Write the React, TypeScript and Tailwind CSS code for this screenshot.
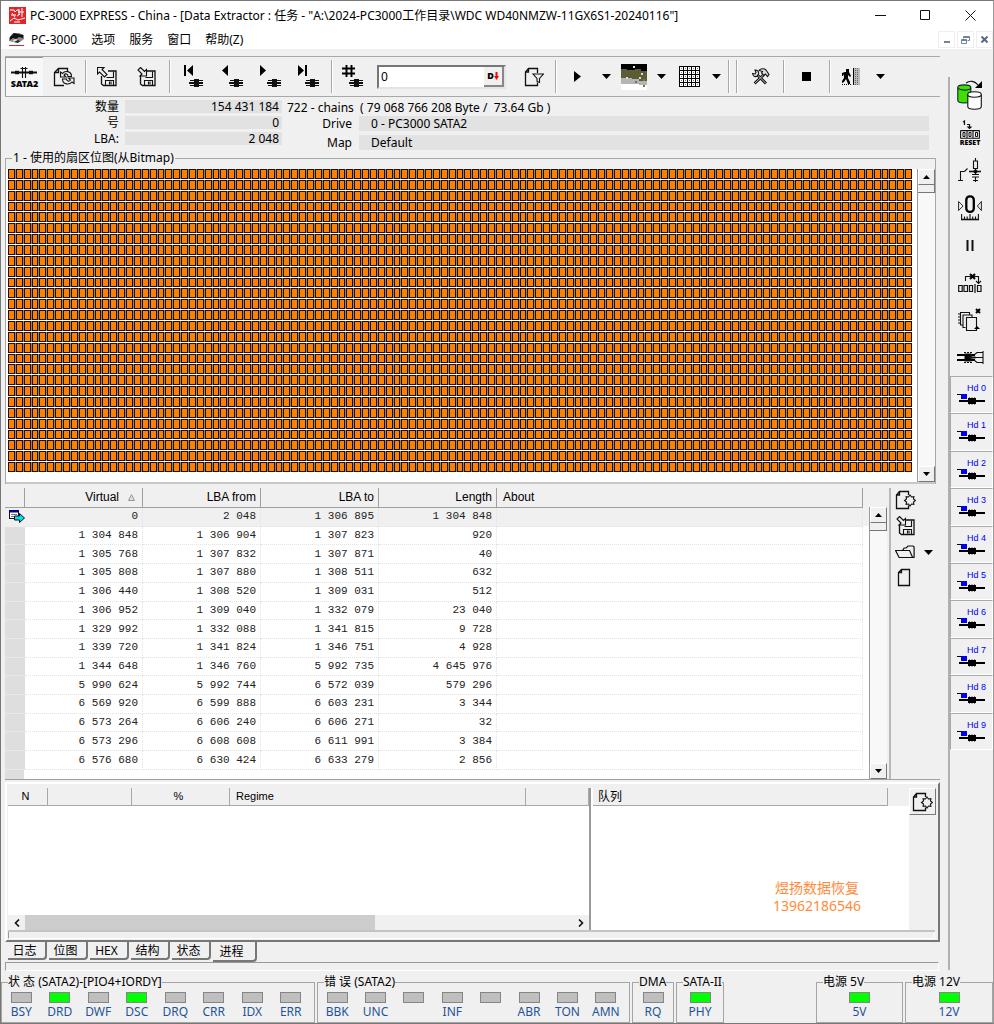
import type { ReactNode } from 'react';

const COLS = 115;
const ROWS = 28;

const rows = [
  ['0', '2 048', '1 306 895', '1 304 848'],
  ['1 304 848', '1 306 904', '1 307 823', '920'],
  ['1 305 768', '1 307 832', '1 307 871', '40'],
  ['1 305 808', '1 307 880', '1 308 511', '632'],
  ['1 306 440', '1 308 520', '1 309 031', '512'],
  ['1 306 952', '1 309 040', '1 332 079', '23 040'],
  ['1 329 992', '1 332 088', '1 341 815', '9 728'],
  ['1 339 720', '1 341 824', '1 346 751', '4 928'],
  ['1 344 648', '1 346 760', '5 992 735', '4 645 976'],
  ['5 990 624', '5 992 744', '6 572 039', '579 296'],
  ['6 569 920', '6 599 888', '6 603 231', '3 344'],
  ['6 573 264', '6 606 240', '6 606 271', '32'],
  ['6 573 296', '6 608 608', '6 611 991', '3 384'],
  ['6 576 680', '6 630 424', '6 633 279', '2 856'],
];

const stateLeds = [
  { label: 'BSY' },
  { label: 'DRD', on: true },
  { label: 'DWF' },
  { label: 'DSC', on: true },
  { label: 'DRQ' },
  { label: 'CRR' },
  { label: 'IDX' },
  { label: 'ERR' },
];

const errorLeds = [
  { label: 'BBK' },
  { label: 'UNC' },
  { label: '' },
  { label: 'INF' },
  { label: '' },
  { label: 'ABR' },
  { label: 'TON' },
  { label: 'AMN' },
];

/* ---------- icons ---------- */

function Icon({ w, h, children }: { w: number; h: number; children: ReactNode }) {
  return (
    <svg width={w} height={h} viewBox={`0 0 ${w} ${h}`} fill="none" stroke="#111" strokeWidth="1.1" className="shrink-0">
      {children}
    </svg>
  );
}

// small platter glyph under the navigation arrows
const platter = (
  <g stroke="none" fill="#111" shapeRendering="crispEdges">
    <path d="M8 15h13v1h-13zM7 17h14v2h-14zM8 20h13v1h-13z" />
    <path d="M12 14h5v8h-5z" />
  </g>
);

function LogoIcon() {
  return (
    <svg width="17" height="17" viewBox="0 0 17 17" className="shrink-0">
      <rect width="17" height="17" fill="#e0262b" />
      <path d="M1 3h4l1 2 2-2h2M10 2v6M13 1v9M9 5h6M2 8h5M3 6l3 4M8 9l3-2M1 14l4-3 4 2 7-2M5 15h6" stroke="#fff" strokeWidth="1" fill="none" />
    </svg>
  );
}

function DriveIcon() {
  return (
    <svg width="15" height="15" viewBox="0 0 15 15" className="shrink-0">
      <path d="M0 6l4-5h6l5 2v4l-4 3H4L0 9z" fill="#888" />
      <path d="M1 5l4-4 4 1 5 1v3l-4-1-3 2-3-1-3 2z" fill="#111" />
      <path d="M4 8l3-1 3 2-3 2H5z" fill="#ddd" />
      <path d="M5 10l4 1 2-2-2-1z" fill="#222" />
      <rect y="13" width="15" height="1" fill="#e0262b" />
    </svg>
  );
}

function SataIcon() {
  return (
    <span className="flex flex-col items-center">
      <Icon w={26} h={13}>
        <path d="M0 6.500h26" strokeWidth="2" />
        <path d="M4 6.500h4M18 6.500h4" strokeWidth="3.500" />
        <path d="M9.500 2.500h7M11.500 1v11M14.500 1v11" />
      </Icon>
      <span className="text-[9px] leading-[10px] font-black">SATA2</span>
    </span>
  );
}

function SyncPageIcon() {
  return (
    <Icon w={22} h={20}>
      <path d="M11 18.500h-9.500v-13l4-4h9v3M5.500 1.500v4h-4" strokeWidth="1.300" />
      <path d="M18.500 9.500c0-6-7-6-9-3l-2-1.500v5h5.500l-2-2c1.500-2 4-1 4 1.500z" fill="#efefef" />
      <path d="M9.500 12c0 6 7 6 9.500 3l2 1.500v-5.500h-5.500l2 2c-1.500 2-4 1-4-1z" fill="#efefef" />
    </Icon>
  );
}

function FloppyIcon({ out }: { out?: boolean }) {
  return (
    <Icon w={20} h={20}>
      <path d="M4.500 9v8l2 1.500h12.500v-14.500h-8" strokeWidth="1.300" />
      <path d="M9.500 10.500h7v-6M8.500 18v-4.500h8v5M12.500 14.500v3M14 14.500v3" />
      {out ? (
        <path d="M4.500.5l4 4 2-2v6.500h-6.500l2-2-4-4z" fill="#efefef" />
      ) : (
        <path d="M.5.5h6.500l-2 2 5 5-2.500 2.500-5-5-2 2z" fill="#efefef" />
      )}
    </Icon>
  );
}

function NavIcon({ kind }: { kind: 'first' | 'prev' | 'next' | 'last' }) {
  const shape = {
    first: 'M2 0h2v11h-2zM11 0v11l-6-5.500z',
    prev: 'M6 0v11l-6-5.500z',
    next: 'M0 0v11l6-5.500z',
    last: 'M0 0v11l6-5.500zM7 0h2v11h-2z',
  }[kind];
  return (
    <Icon w={21} h={23}>
      <path d={shape} fill="#000" stroke="none" />
      {platter}
    </Icon>
  );
}

function HashIcon() {
  return (
    <Icon w={22} h={23}>
      <path d="M4.500 0v12M9.500 0v12M0 3.500h13M0 8.500h13" stroke="#000" strokeWidth="1.900" />
      {platter}
    </Icon>
  );
}

function FilterPageIcon() {
  return (
    <Icon w={20} h={20}>
      <path d="M13.500 6v-4.500h-9l-3 3.500v13.500h12v-3M4.500 1.500v3.500h-3" strokeWidth="1.300" />
      <path d="M9 7h10.500l-4 4.500v4l-2.500-1v-3z" fill="#efefef" />
    </Icon>
  );
}

function DropArrow() {
  return (
    <Icon w={9} h={5}>
      <path d="M0 0h9l-4.500 5z" fill="#000" stroke="none" />
    </Icon>
  );
}

function PictureIcon() {
  return (
    <svg width="26" height="26" viewBox="0 0 26 26" shapeRendering="crispEdges">
      <rect width="26" height="26" fill="#fff" />
      <path d="M0 0h26v7h-6v-2h-6v1h-8v-1h-6z" fill="#000" />
      <path d="M0 5h6v1h8v-1h6v2h6v10h-8v-2h-7v-1h-11z" fill="#5d5d35" />
      <path d="M0 14h11v1h7v2h8v4h-8v-1h-18z" fill="#b4b4b4" />
      <path d="M12 2h2v2h-2zM20 9h2v2h-2zM5 13h2v2h-2zM18 13h2v2h-2z" fill="#ddd" />
      <path d="M14 17h2v2h-2zM22 15h2v2h-2zM22 21h2v2h-2z" fill="#77774f" />
    </svg>
  );
}

function GridIcon() {
  return (
    <svg width="21" height="21" viewBox="0 0 21 21" shapeRendering="crispEdges">
      <rect width="21" height="21" fill="#fff" />
      <path d="M.5 0v21M4.500 0v21M8.500 0v21M12.500 0v21M16.500 0v21M20.500 0v21M0 .5h21M0 4.500h21M0 8.500h21M0 12.500h21M0 16.500h21M0 20.500h21" stroke="#000" />
      <path d="M2 2.500h18M2 6.500h18M2 10.500h18M2 14.500h18M2 18.500h18" stroke="#777" strokeDasharray="1 3" />
    </svg>
  );
}

function ToolsIcon() {
  return (
    <Icon w={18} h={17}>
      <path d="M5.500 7l8.500 8.500M12 6.500l-9.500 9" strokeWidth="2.800" />
      <path d="M5.500 7l8.500 8.500M12 6.500l-9.500 9" stroke="#eee" strokeWidth="0.800" />
      <path d="M.6 5.500l2.400.5 1-1.500-1-2.500c3 0 4 2 3.500 4l-2 2.500c-2 .5-3.500-.5-3.900-3z" fill="#ddd" />
      <path d="M7 2.500c1-2 5-2.500 7-.5l3 4.500-1.500 2-2-2.500-1.500 1.500-2.500-2.500 1-1.500z" fill="#ddd" />
    </Icon>
  );
}

function ExitIcon() {
  return (
    <Icon w={19} h={18}>
      <g stroke="none" fill="#000">
        <path d="M4 1h3v3h-3zM3 4h4l2 4-1 1-2-2v3l2 4v2h-2l-2-5-2 3-2 1v-2l2-3v-4l-1 2h-1v-3z" />
      </g>
      <path d="M0 16.500h10" strokeDasharray="1 1" />
      <rect x="11" y="0" width="7" height="17" fill="#bbb" stroke="none" />
      <path d="M11.500 0v17" stroke="#000" strokeWidth="1" />
      <path d="M13.500 0v17M15.500 0v17" stroke="#666" strokeWidth="1" strokeDasharray="1 1" />
    </Icon>
  );
}

function GearPageIcon() {
  return (
    <Icon w={21} h={20}>
      <path d="M13.500 5v-3.500h-9l-3 3.500v13.500h12v-3M4.500 1.500v3.500h-3" strokeWidth="1.300" />
      <path
        d="M15 5l1.500 2 2.400-.4-.4 2.400 2 1.500-2 1.500.4 2.400-2.400-.4-1.500 2-1.500-2-2.400.4.4-2.400-2-1.500 2-1.500-.4-2.400 2.400.4z"
        fill="#efefef"
      />
    </Icon>
  );
}

function OpenFolderIcon() {
  return (
    <Icon w={20} h={14}>
      <path d="M.6 5.500h14l3 7h-13.500zM17.600 12.500h1.500v-10.500l-1-1h-5l-2 2h-2l-1.500 2.500" strokeWidth="1.200" />
    </Icon>
  );
}

function BlankPageIcon() {
  return (
    <Icon w={14} h={19}>
      <path d="M4.500 1.500h8v16h-11v-13zM4.500 1.500v3h-3" strokeWidth="1.300" />
    </Icon>
  );
}

function CopyDisksIcon() {
  return (
    <Icon w={26} h={31}>
      <path d="M9 3c4-3 9-2 12 2" />
      <path d="M25 1v7h-7z" fill="#000" stroke="none" />
      <path d="M.8 7.500v13c0 3.300 13 3.300 13 0v-13" fill="#3fe000" stroke="#123" />
      <ellipse cx="7.300" cy="7.500" rx="6.500" ry="2.600" fill="#3fe000" stroke="#123" />
      <path d="M10.800 14.500v12c0 3.700 13.500 3.700 13.500 0v-12" fill="#fff" />
      <ellipse cx="17.500" cy="14.500" rx="6.800" ry="2.700" fill="#fff" />
    </Icon>
  );
}

function ResetIcon() {
  return (
    <span className="flex flex-col items-center">
      <Icon w={20} h={19}>
        <path d="M3 2l1.500-1v4M7 4.500h2.500v4M7.500 6.500l2 2 2-2" strokeWidth="1.200" />
        <path d="M.6 10.600h19M.6 18.200h19M.6 10.500v8M19.400 10.500v8M7 10.500v8M13 10.500v8" />
        <path d="M3 12.500h2v4h-2zM9 12.500h2v4h-2zM15.500 12.500h2v4h-2z" strokeWidth="1" />
      </Icon>
      <span className="text-[7px] leading-[8px] font-black">RESET</span>
    </span>
  );
}

function CircuitIcon() {
  return (
    <Icon w={24} h={24}>
      <path d="M0 22.500h5M2.500 22.500v-9h4l3-3M17.500 0v3M15.500 3h4v7.500h-4zM17.500 10.500v6M14 16.500h7M14 19h7M17.500 19v5M15 22.500h5" />
      <path d="M11 13.500h12" strokeWidth="1.600" />
      <circle cx="17.500" cy="13.500" r="1.500" fill="#000" />
    </Icon>
  );
}

function ZeroIcon() {
  return (
    <Icon w={24} h={26}>
      <path d="M.6 6.500v9l4.500-4.500zM23.400 6.500v9l-4-4.500z" strokeWidth="0.900" />
      <rect x="8.300" y="1.400" width="7.500" height="15.500" rx="3.500" stroke="#000" strokeWidth="2.300" />
      <path d="M3 24.500h18" strokeWidth="1.600" />
      <path d="M3.600 19v6M6.500 21.500v3M9.200 21.500v3M12 19v6M14.700 21.500v3M17.500 21.500v3M20.400 19v6" />
    </Icon>
  );
}

function PauseIcon() {
  return (
    <Icon w={8} h={11}>
      <path d="M1.500 0v11M6.500 0v11" strokeWidth="2" />
    </Icon>
  );
}

function SkipBlocksIcon() {
  return (
    <Icon w={24} h={20}>
      <path d="M7.500 8v-4.500h13v6M18 8l2.500 2.500 2.500-2.500" />
      <path d="M12 1l5 5M17 1l-5 5" stroke="#000" strokeWidth="2" />
      <path d="M.7 12.500h3.500v6h-3.500zM6 12.500h3.500v6h-3.500zM11.500 12.500h3v6h-3zM19.500 12.500h3.500v6h-3.500zM17 11v9" strokeWidth="1.200" />
    </Icon>
  );
}

function StackIcon() {
  return (
    <Icon w={24} h={24}>
      <path d="M5 17h-2.500v-12.500h9v2M7.500 19.500h-2.500v-12.500h9v2.500" />
      <path d="M2 6h-2M2 9h-2M2 12h-2M2 15h-2" />
      <path d="M8.500 9.500h10v13h-10z" fill="#efefef" />
      <path d="M18 1l4 4M22 1l-4 4" stroke="#000" strokeWidth="2" />
      <path d="M16 21h6l-3-3z" fill="#000" stroke="none" />
    </Icon>
  );
}

function ConnectorIcon() {
  return (
    <Icon w={27} h={13}>
      <path d="M0 4h18M0 9h18" stroke="#000" strokeWidth="2" />
      <path d="M8 3h6v7h-6zM12 6h6v1h-6z" fill="#000" />
      <path d="M7 1.500h2M10 1.500h2M13 1.500h2M7 11.500h2M10 11.500h2M13 11.500h2" />
      <path d="M17 4l3-2.500h6v10h-6l-3-2.500M18 6.500h8M26 0v13" />
    </Icon>
  );
}

function HdIcon() {
  return (
    <svg width="29" height="11" viewBox="0 1 29 11" fill="none" className="shrink-0">
      <path d="M0 1.500h6" stroke="#000" />
      <rect x="4" y="1" width="6" height="5" fill="#0000f0" />
      <path d="M2 8h26" stroke="#000" strokeWidth="2" />
      <path d="M11 5h8v6h-8z" fill="#000" />
      <path d="M12.500 4.500v7M15 4.500v7M17.500 4.500v7" stroke="#000" />
    </svg>
  );
}

function RowMarkerIcon() {
  return (
    <svg width="16" height="14" viewBox="0 0 16 14" fill="none">
      <rect x=".5" y=".5" width="9" height="8" fill="#fff" stroke="#111" />
      <rect width="10" height="2.500" fill="#000080" />
      <path d="M2 4.500h6M2 6.500h4" stroke="#777" />
      <path d="M5.500 6h5v-2.500l5 4.500-5 4.500v-2.500h-5z" fill="#00e0f0" stroke="#111" />
    </svg>
  );
}

/* ---------- shared pieces ---------- */

function ToolButton({ label, className, children }: { label: string; className: string; children: ReactNode }) {
  return (
    <button type="button" aria-label={label} className={`flex h-full shrink-0 items-center justify-center ${className}`}>
      {children}
    </button>
  );
}

function Separator({ className = '' }: { className?: string }) {
  return <div className={`h-[33px] w-[2px] shrink-0 border-l border-[#a8a8a8] bg-white ${className}`} />;
}

function ScrollButton({ down }: { down?: boolean }) {
  return (
    <button
      type="button"
      aria-label={down ? 'Scroll down' : 'Scroll up'}
      className="flex h-4 w-full items-center justify-center border border-t-white border-r-[#777] border-b-[#777] border-l-white bg-[#f0f0f0]"
    >
      <svg width="7" height="4" viewBox="0 0 7 4">
        <path d={down ? 'M0 0h7l-3.500 4z' : 'M0 4h7l-3.500-4z'} fill="#000" />
      </svg>
    </button>
  );
}

function VScroll() {
  return (
    <div className="flex w-[18px] shrink-0 flex-col border-l border-[#999] bg-[#f8f8f8]">
      <ScrollButton />
      <div className="h-2 border-r border-b border-[#777] bg-[#f0f0f0]" />
      <div className="grow" />
      <ScrollButton down />
    </div>
  );
}

function Led({ label, on }: { label: string; on?: boolean }) {
  return (
    <div className="flex flex-1 flex-col items-center">
      <div className={`h-[11px] w-[21px] border border-[#858585] ${on ? 'bg-[#00ff00]' : 'bg-[#bfbfbf]'}`} />
      <span className="h-4 text-xs leading-[17px] text-[#1f5596]">{label}</span>
    </div>
  );
}

function LedGroup({ title, className, children }: { title: string; className: string; children: ReactNode }) {
  return (
    <fieldset className={`min-w-0 border border-[#a5a5a5] ${className}`}>
      <legend className="ml-[6px] h-4 text-xs leading-4 whitespace-nowrap">{title}</legend>
      <div className="flex pt-[2px]">{children}</div>
    </fieldset>
  );
}

/* ---------- sections ---------- */

function TitleBar() {
  return (
    <header className="bg-white">
      <div className="flex h-[29px] items-center pl-[8px]">
        <LogoIcon />
        <h1 className="ml-[4px] grow text-xs whitespace-nowrap">
          PC-3000 EXPRESS - China - [Data Extractor : 任务 - "A:\2024-PC3000工作目录\WDC WD40NMZW-11GX6S1-20240116"]
        </h1>
        <div className="flex">
          <button type="button" aria-label="Minimize" className="flex h-7 w-[45px] items-center justify-center">
            <Icon w={11} h={11}><path d="M0 5.500h11" strokeWidth="1" /></Icon>
          </button>
          <button type="button" aria-label="Maximize" className="flex h-7 w-[44px] items-center justify-center">
            <Icon w={11} h={11}><path d="M.5.5h9v9h-9z" strokeWidth="1" /></Icon>
          </button>
          <button type="button" aria-label="Close" className="flex h-7 w-[46px] items-center justify-center">
            <Icon w={11} h={11}><path d="M.5.5l10 10M10.500.5l-10 10" strokeWidth="1" /></Icon>
          </button>
        </div>
      </div>
      <nav className="flex h-[19px] items-center pl-[8px] text-xs">
        <DriveIcon />
        <button type="button" className="ml-[7px]">PC-3000</button>
        <button type="button" className="ml-[14px]">选项</button>
        <button type="button" className="ml-[14px]">服务</button>
        <button type="button" className="ml-[14px]">窗口</button>
        <button type="button" className="ml-[14px]">帮助(Z)</button>
        <div className="ml-auto flex gap-[2px]">
          <button type="button" aria-label="Minimize child" className="flex h-[17px] w-[17px] items-end justify-center border border-[#efefef] pb-[4px]">
            <svg width="6" height="2"><path d="M0 1h6" stroke="#71839a" strokeWidth="2" /></svg>
          </button>
          <button type="button" aria-label="Restore child" className="flex h-[17px] w-[17px] items-center justify-center border border-[#efefef]">
            <svg width="9" height="8" fill="none" stroke="#71839a"><path d="M2.500 2.500v-2h6v4h-2M.5 3.500h5v4h-5zM2.500 1.500h6M.5 4.500h5" /></svg>
          </button>
          <button type="button" aria-label="Close child" className="flex h-[17px] w-[17px] items-center justify-center border border-[#efefef]">
            <svg width="7" height="7"><path d="M.5.5l6 6M6.500.5l-6 6" stroke="#586a82" strokeWidth="2" /></svg>
          </button>
        </div>
      </nav>
    </header>
  );
}

function Toolbar() {
  return (
    <div className="flex h-[41px] items-center border-t border-b border-[#a8a8a8]">
      <ToolButton label="SATA2" className="w-[38px] border-t border-l border-[#999] bg-[#f7f7f7]"><SataIcon /></ToolButton>
      <ToolButton label="Refresh task" className="w-[42px]"><SyncPageIcon /></ToolButton>
      <Separator />
      <ToolButton label="Load" className="w-[40px]"><FloppyIcon /></ToolButton>
      <ToolButton label="Save" className="w-[38px]"><FloppyIcon out /></ToolButton>
      <Separator className="ml-[4px]" />
      <ToolButton label="First" className="w-[42px]"><NavIcon kind="first" /></ToolButton>
      <ToolButton label="Previous" className="w-[38px]"><NavIcon kind="prev" /></ToolButton>
      <ToolButton label="Next" className="w-[38px]"><NavIcon kind="next" /></ToolButton>
      <ToolButton label="Last" className="w-[38px]"><NavIcon kind="last" /></ToolButton>
      <Separator className="ml-[4px]" />
      <ToolButton label="Go to number" className="w-[40px]"><HashIcon /></ToolButton>
      <div className="ml-[4px] flex h-[24px] w-[129px] shrink-0 border-2 border-t-[#777] border-r-[#e4e4e4] border-b-[#e4e4e4] border-l-[#777] bg-white">
        <input aria-label="Position" defaultValue="0" className="w-0 min-w-0 grow pl-[2px] text-xs outline-none" />
        <button type="button" aria-label="Decimal" className="flex w-[20px] items-center justify-center border-r-2 border-b-2 border-[#888] bg-[#f0f0f0] text-[9px] font-black">
          D
          <svg width="5" height="8" viewBox="0 0 5 8"><path d="M1.500 0h2v4h1.500l-2.500 4-2.500-4h1.500z" fill="#f00" /></svg>
        </button>
      </div>
      <ToolButton label="Filter" className="ml-[7px] w-[42px]"><FilterPageIcon /></ToolButton>
      <Separator />
      <ToolButton label="Start" className="w-[40px]">
        <svg width="7" height="11" viewBox="0 0 7 11"><path d="M0 0l7 5.500-7 5.500z" /></svg>
      </ToolButton>
      <ToolButton label="Start options" className="w-[19px]"><DropArrow /></ToolButton>
      <ToolButton label="Picture" className="w-[36px]"><PictureIcon /></ToolButton>
      <ToolButton label="Picture options" className="w-[19px]"><DropArrow /></ToolButton>
      <ToolButton label="Grid" className="w-[36px]"><GridIcon /></ToolButton>
      <ToolButton label="Grid options" className="w-[19px]"><DropArrow /></ToolButton>
      <Separator className="ml-[2px]" />
      <Separator className="ml-[6px]" />
      <ToolButton label="Tools" className="w-[45px]"><ToolsIcon /></ToolButton>
      <Separator />
      <ToolButton label="Stop" className="w-[43px]"><span className="h-[9px] w-[9px] bg-black" /></ToolButton>
      <Separator className="ml-px" />
      <ToolButton label="Exit" className="w-[41px]"><ExitIcon /></ToolButton>
      <ToolButton label="Exit options" className="w-[17px]"><DropArrow /></ToolButton>
    </div>
  );
}

function TaskInfo() {
  return (
    <div className="flex h-[53px] pt-[3px] text-xs">
      <dl className="grid auto-rows-[13px] grid-cols-[114px_157px] gap-x-[6px] gap-y-[3px] text-right leading-[14px]">
        <dt>数量</dt>
        <dd className="bg-[#e2e2e2] pr-[3px]">154 431 184</dd>
        <dt>号</dt>
        <dd className="bg-[#e2e2e2] pr-[3px]">0</dd>
        <dt>LBA:</dt>
        <dd className="bg-[#e2e2e2] pr-[3px]">2 048</dd>
      </dl>
      <div className="mr-[11px] ml-[5px] grow">
        <p className="h-[16px] leading-[15px] whitespace-pre">722 - chains  ( 79 068 766 208 Byte /  73.64 Gb )</p>
        <dl className="grid auto-rows-[15px] grid-cols-[65px_1fr] gap-x-[7px] gap-y-[4px] leading-[15px]">
          <dt className="text-right">Drive</dt>
          <dd className="bg-[#e2e2e2] pl-[12px]">0 - PC3000 SATA2</dd>
          <dt className="text-right">Map</dt>
          <dd className="bg-[#e2e2e2] pl-[12px]">Default</dd>
        </dl>
      </div>
    </div>
  );
}

function SectorMap() {
  return (
    <fieldset className="mr-[4px] min-w-0 border border-b-0 border-[#a8a8a8]">
      <legend className="ml-[6px] h-4 px-[1px] text-xs leading-4 whitespace-nowrap">1 - 使用的扇区位图(从Bitmap)</legend>
      <div className="mt-[3px] flex h-[315px] border-b-2 border-[#c8c8c8] bg-white">
        <div className="grow pr-[5px] pl-[2px]">
          <div className="grid h-[303px] grid-rows-[repeat(28,1fr)] gap-y-px">
            {Array.from({ length: ROWS }, (_, r) => (
              <div key={r} className="grid grid-cols-[repeat(115,1fr)] gap-x-px bg-[#858585]">
                {Array.from({ length: COLS }, (_, c) => (
                  <span key={c} className="border border-[#1c1206] bg-[#ff8000]" />
                ))}
              </div>
            ))}
          </div>
        </div>
        <VScroll />
      </div>
    </fieldset>
  );
}

function ChainTable() {
  const th = 'border-r border-b border-[#a0a0a0] bg-[#f0f0f0] px-[4px] font-normal';
  const td = 'border-r border-b border-dotted border-[#e4e4e4] pr-[4px] text-right';
  return (
    <section className="mt-[4px] flex h-[292px] border-b border-[#a0a0a0]">
      <div className="flex min-w-0 grow flex-col bg-white">
        <div className="flex grow">
          <table className="h-[282px] w-full table-fixed border-separate border-spacing-0">
            <colgroup>
              <col className="w-[20px]" />
              <col className="w-[118px]" />
              <col className="w-[118px]" />
              <col className="w-[118px]" />
              <col className="w-[118px]" />
              <col />
            </colgroup>
            <thead className="h-[20px] font-['Liberation_Sans',sans-serif] text-xs leading-[19px]">
              <tr>
                <th className={th} aria-label="Marker" />
                <th className={`${th} text-right`}>
                  Virtual
                  <svg width="7" height="7" viewBox="0 0 7 7" className="mr-[3px] ml-[9px] inline-block align-baseline"><path d="M.5 6.500l3-6 3 6z" fill="#ddd" stroke="#999" /></svg>
                </th>
                <th className={`${th} text-right`}>LBA from</th>
                <th className={`${th} text-right`}>LBA to</th>
                <th className={`${th} text-right`}>Length</th>
                <th className={`${th} pl-[6px] text-left`}>About</th>
              </tr>
            </thead>
            <tbody className="font-['Liberation_Mono',monospace] text-[11px] leading-[17px] text-[#222]">
              {rows.map((row, i) => (
                <tr key={row[0]} className={i === 0 ? 'bg-[#f0f0f0]' : ''}>
                  <td className={i === 0 ? 'bg-[#f0f0f0] pl-[4px]' : 'border-b border-[#e8e8e8] bg-[#dedede]'}>
                    {i === 0 && <RowMarkerIcon />}
                  </td>
                  {row.map((cell, c) => (
                    <td key={c} className={td}>{cell}</td>
                  ))}
                  <td className={td} />
                </tr>
              ))}
            </tbody>
          </table>
          <div className="flex w-[6px] shrink-0 flex-col">
            <div className="h-[38px] bg-[#f0f0f0]" />
          </div>
        </div>
        <div className="h-[9px] w-[19px] bg-[#dedede]" />
      </div>
      <div className="flex bg-[#f0f0f0] pt-[19px]">
        <VScroll />
      </div>
      <div className="ml-[2px] flex w-[51px] shrink-0 flex-col items-start gap-[6px] border-l-2 border-[#b8b8b8] pt-[2px] pl-[4px]">
        <button type="button" aria-label="Page settings"><GearPageIcon /></button>
        <button type="button" aria-label="Save list"><FloppyIcon out /></button>
        <div className="flex items-center gap-[9px] py-[3px]">
          <button type="button" aria-label="Open list"><OpenFolderIcon /></button>
          <button type="button" aria-label="Open options"><DropArrow /></button>
        </div>
        <button type="button" aria-label="New list" className="ml-[2px]"><BlankPageIcon /></button>
      </div>
    </section>
  );
}

function ProcessPanel() {
  const head = 'h-[18px] border-r border-b border-[#a8a8a8] font-normal';
  return (
    <section className="mt-[2px] h-[160px] border-2 border-t-white border-r-[#777] border-b-[#777] border-l-white pt-[4px] pr-[3px] pl-px">
      <div className="flex h-[144px] border-b-2 border-[#c4c4c4]">
        <div className="flex w-[583px] shrink-0 flex-col border-r-2 border-[#999] bg-white">
          <table className="w-full table-fixed border-separate border-spacing-0 bg-[#f0f0f0] font-['Liberation_Sans',sans-serif] text-[11px] leading-[17px]">
            <thead>
              <tr>
                <th className={`${head} w-[40px] pr-[4px]`}>N</th>
                <th className={`${head} w-[84px]`} aria-label="Name" />
                <th className={`${head} w-[98px] pr-[4px]`}>%</th>
                <th className={`${head} w-[296px] pl-[6px] text-left`}>Regime</th>
                <th className={head} aria-label="Extra" />
              </tr>
            </thead>
          </table>
          <div className="grow" />
          <div className="flex h-[15px] items-stretch bg-[#f0f0f0]">
            <button type="button" aria-label="Scroll left" className="flex w-[17px] items-center justify-center">
              <Icon w={6} h={8}><path d="M5 .5l-3.500 3.500 3.500 3.500" strokeWidth="1.600" /></Icon>
            </button>
            <div className="w-[350px] bg-[#cdcdcd]" />
            <div className="grow" />
            <button type="button" aria-label="Scroll right" className="flex w-[17px] items-center justify-center">
              <Icon w={6} h={8}><path d="M1 .5l3.500 3.500-3.500 3.500" strokeWidth="1.600" /></Icon>
            </button>
          </div>
        </div>
        <div className="flex min-w-0 grow flex-col bg-white pl-[2px]">
          <div className="flex bg-[#f0f0f0]">
            <h2 className="mr-[21px] h-[18px] grow border-r border-b border-[#a8a8a8] pl-[5px] text-xs leading-[18px]">队列</h2>
          </div>
          <div className="mr-[48px] flex grow flex-col items-end justify-end pb-[15px] text-[#ff8c3a]">
            <p className="mr-[2px] text-sm leading-[18px]">煜扬数据恢复</p>
            <p className="text-sm leading-[18px]">13962186546</p>
          </div>
        </div>
        <div className="w-[26px] shrink-0">
          <button type="button" aria-label="Queue settings" className="flex h-[27px] w-[27px] items-center justify-center border border-t-white border-r-[#777] border-b-[#777] border-l-white">
            <GearPageIcon />
          </button>
        </div>
      </div>
      <div className="h-[7px] border-r border-b border-l border-r-white border-b-white border-l-[#999]" />
    </section>
  );
}

function BottomTabs() {
  const tabs = ['日志', '位图', 'HEX', '结构', '状态'];
  return (
    <div role="tablist" className="flex h-[20px] items-start gap-[2px] pl-[3px] text-xs">
      {tabs.map((tab) => (
        <button
          key={tab}
          type="button"
          role="tab"
          aria-selected="false"
          className="h-[18px] w-[39px] rounded-br-sm border-r-2 border-b-2 border-[#777] pr-[4px] leading-[17px]"
        >
          {tab}
        </button>
      ))}
      <button type="button" role="tab" aria-selected="true" className="h-[20px] w-[44px] rounded-br-sm border-r-2 border-b-2 border-[#777] pr-[5px] leading-[20px]">
        进程
      </button>
    </div>
  );
}

function Sidebar() {
  return (
    <aside className="mt-[28px] mb-px w-[45px] shrink-0 border-l-2 border-[#b0b0b0]">
      <div className="grid h-[299px] grid-rows-8 pr-[3px]">
        <ToolButton label="Copy disks" className="w-full"><CopyDisksIcon /></ToolButton>
        <ToolButton label="Reset" className="w-full"><ResetIcon /></ToolButton>
        <ToolButton label="Power circuit" className="w-full"><CircuitIcon /></ToolButton>
        <ToolButton label="Recalibrate" className="w-full"><ZeroIcon /></ToolButton>
        <ToolButton label="Pause" className="w-full"><PauseIcon /></ToolButton>
        <ToolButton label="Skip blocks" className="w-full"><SkipBlocksIcon /></ToolButton>
        <ToolButton label="Stack" className="w-full"><StackIcon /></ToolButton>
        <ToolButton label="Connector" className="w-full"><ConnectorIcon /></ToolButton>
      </div>
      <div className="grid h-[374px] grid-rows-10">
        {Array.from({ length: 10 }, (_, i) => (
          <button
            key={i}
            type="button"
            className="flex flex-col items-center border-t border-r border-b border-l border-t-[#aaa] border-r-white border-b-white border-l-[#aaa] pt-[6px] pr-px"
          >
            <span className="self-end pr-[5px] font-['Liberation_Sans',sans-serif] text-[9px] leading-[11px] text-[#0000f0]">Hd {i}</span>
            <HdIcon />
          </button>
        ))}
      </div>
    </aside>
  );
}

function App() {
  return (
    <div className="w-full border border-[#777] border-r-[#999] bg-[#f0f0f0] font-['Noto_Sans','Noto_Sans_CJK_SC',sans-serif] text-black">
      <TitleBar />
      <div className="flex">
        <main className="mr-[8px] min-w-0 grow pt-[7px] pl-[4px]">
          <Toolbar />
          <TaskInfo />
          <SectorMap />
          <ChainTable />
          <ProcessPanel />
          <BottomTabs />
          <div className="mr-px h-[9px] border border-t-[#999] border-r-white border-b-white border-l-[#999]" />
        </main>
        <Sidebar />
      </div>
      <footer className="flex h-[52px] gap-[2px] pt-[3px]">
        <LedGroup title="状 态 (SATA2)-[PIO4+IORDY]" className="w-[314px] pr-[4px]">
          {stateLeds.map((led) => (
            <Led key={led.label} {...led} />
          ))}
        </LedGroup>
        <LedGroup title="错 误 (SATA2)" className="w-[313px] pr-[4px]">
          {errorLeds.map((led, i) => (
            <Led key={i} {...led} />
          ))}
        </LedGroup>
        <LedGroup title="DMA" className="w-[42px]"><Led label="RQ" /></LedGroup>
        <LedGroup title="SATA-II" className="w-[48px]"><Led label="PHY" on /></LedGroup>
        <LedGroup title="电源 5V" className="ml-auto w-[87px]"><Led label="5V" on /></LedGroup>
        <LedGroup title="电源 12V" className="w-[88px]"><Led label="12V" on /></LedGroup>
      </footer>
    </div>
  );
}

export default App;
